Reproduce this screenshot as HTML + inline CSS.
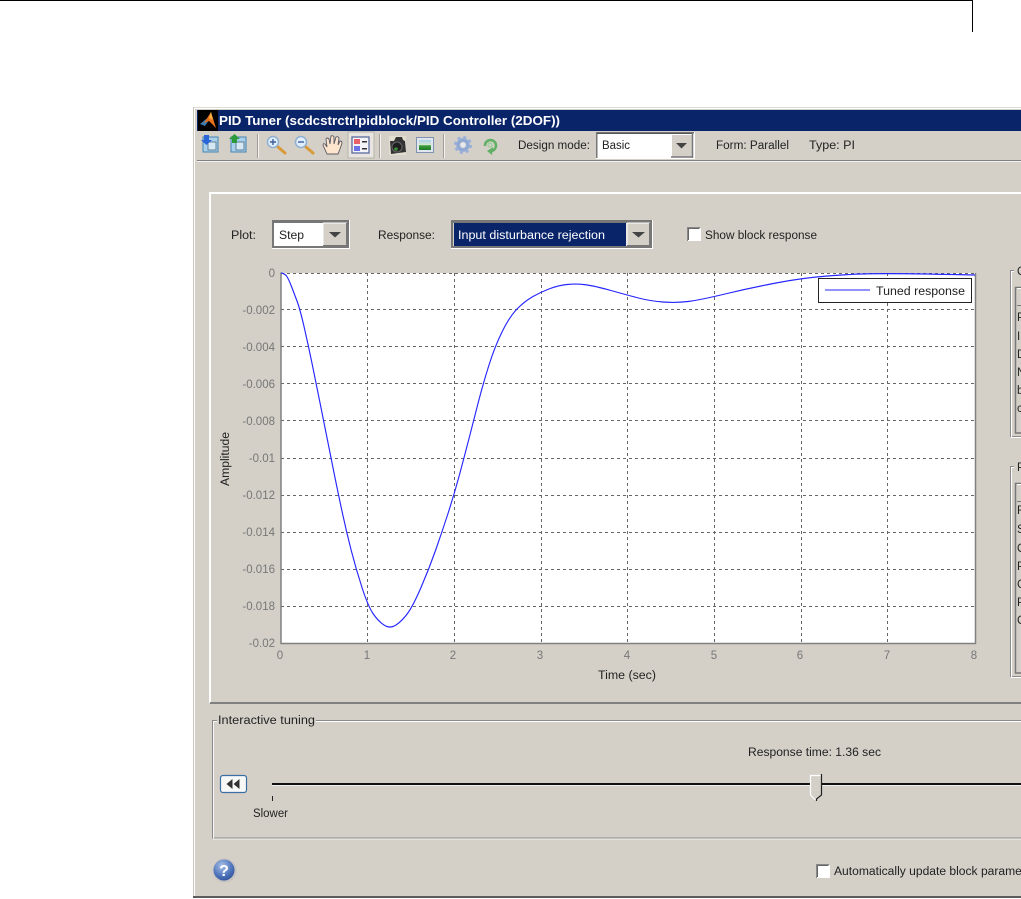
<!DOCTYPE html>
<html>
<head>
<meta charset="utf-8">
<title>PID Tuner</title>
<style>
html,body{margin:0;padding:0;background:#fff;width:1021px;height:899px;overflow:hidden}
svg{display:block;position:absolute;left:0;top:0;filter:blur(.35px)}
text{font-family:"Liberation Sans",sans-serif;font-size:11.5px;fill:#222}
.t{fill:#777;font-size:11.5px}
</style>
</head>
<body>
<svg width="1021" height="899" viewBox="0 0 1021 899" xmlns="http://www.w3.org/2000/svg">
<defs>
<radialGradient id="help" cx=".4" cy=".3" r=".8"><stop offset="0" stop-color="#a9c0e8"/><stop offset=".6" stop-color="#4f74bb"/><stop offset="1" stop-color="#2c4b93"/></radialGradient>
<linearGradient id="sky" x1="0" y1="0" x2="0" y2="1"><stop offset="0" stop-color="#a8d0e8"/><stop offset=".5" stop-color="#d8e8d0"/><stop offset=".55" stop-color="#3aa03a"/><stop offset="1" stop-color="#1f7a2a"/></linearGradient>
</defs>

<!-- page rule -->
<rect x="0" y="0" width="973" height="1" fill="#000"/>
<rect x="972" y="0" width="1" height="32" fill="#000"/>

<!-- window -->
<rect x="193" y="107" width="828" height="791" fill="#d4d0c8"/>
<rect x="193" y="107" width="828" height="1" fill="#dedbd4"/>
<rect x="194" y="108" width="827" height="1" fill="#fff"/>
<rect x="193" y="107" width="1" height="791" fill="#c8c5bd"/>
<rect x="194" y="108" width="1" height="789" fill="#fff"/>
<rect x="193" y="896" width="828" height="2" fill="#5c5c5c"/>

<!-- title bar -->
<rect x="197" y="110" width="824" height="21" fill="#0a246a"/>
<rect x="198" y="110" width="20" height="21" fill="#000"/>
<path d="M200 124 L206 119 L209 120 L205 126Z" fill="#3c7ab0"/>
<path d="M204 123 L211 112 L216 128 L213 125 L209 121Z" fill="#e8701a"/>
<path d="M209 118 L211 112 L213 120Z" fill="#f5b040"/>
<text x="219" y="125" style="fill:#fff;font-size:12.5px;font-weight:bold" textLength="341" lengthAdjust="spacingAndGlyphs">PID Tuner (scdcstrctrlpidblock/PID Controller (2DOF))</text>

<!-- toolbar -->
<rect x="197" y="160" width="824" height="1" fill="#808080"/>
<rect x="197" y="161" width="824" height="1" fill="#f4f3f0"/>
<rect x="257" y="134" width="1" height="24" fill="#a09d96"/><rect x="258" y="134" width="1" height="24" fill="#f4f3f0"/>
<rect x="379" y="134" width="1" height="24" fill="#a09d96"/><rect x="380" y="134" width="1" height="24" fill="#f4f3f0"/>
<rect x="443" y="134" width="1" height="24" fill="#a09d96"/><rect x="444" y="134" width="1" height="24" fill="#f4f3f0"/>
<!-- selected toggle -->
<rect x="348" y="132" width="26" height="26" fill="#e8e5e0" stroke="#b5b2aa"/>

<!-- import icons -->
<g>
<rect x="203" y="137" width="15" height="15" fill="#a9d0ea" stroke="#4682b0"/>
<rect x="208" y="142" width="8" height="8" fill="#d5e8f4" stroke="#5a7f98"/>
<path d="M204 135h5v5h3l-5.500 5-5.500-5h3z" fill="#2a66d8"/>
<rect x="231" y="137" width="15" height="15" fill="#a9d0ea" stroke="#4682b0"/>
<rect x="236" y="142" width="8" height="8" fill="#d5e8f4" stroke="#5a7f98"/>
<path d="M232 143h5v-4h3l-5.500-5-5.500 5h3z" fill="#2d9a3a"/>
</g>
<!-- zoom icons -->
<g>
<line x1="278" y1="147" x2="285" y2="153" stroke="#d89a3a" stroke-width="3" stroke-linecap="round"/>
<circle cx="273" cy="142" r="5.500" fill="#dfeefa" stroke="#8fb0d0" stroke-width="1.500"/>
<path d="M270 142h6M273 139v6" stroke="#3b5f9a" stroke-width="1.400"/>
<line x1="306" y1="147" x2="313" y2="153" stroke="#d89a3a" stroke-width="3" stroke-linecap="round"/>
<circle cx="301" cy="142" r="5.500" fill="#dfeefa" stroke="#8fb0d0" stroke-width="1.500"/>
<path d="M298 142h6" stroke="#3b5f9a" stroke-width="1.400"/>
</g>
<!-- hand -->
<path d="M327 154 L323 145 Q323 143 325 144 L327 147 L326 139 Q327 137 329 139 L330 144 L331 136 Q333 135 334 137 L334 144 L336 137 Q338 136 339 138 L338 145 L340 141 Q342 141 342 143 L340 149 L338 154Z" fill="#fde4cc" stroke="#5a5a65" stroke-width=".9"/>
<!-- legend icon -->
<rect x="352" y="137" width="17" height="16" fill="#f4f4f8" stroke="#5a6aa0" stroke-width="1.300"/>
<rect x="354" y="139" width="6" height="5" fill="#e8606a"/>
<rect x="354" y="146" width="6" height="5" fill="#6a72e8"/>
<rect x="362" y="141" width="5" height="1.500" fill="#333"/>
<rect x="362" y="148" width="5" height="1.500" fill="#333"/>
<!-- camera -->
<rect x="389" y="136" width="17" height="19" fill="#e3dfd0"/>
<path d="M390 141 L394 141 L396 137 L402 137 L403 140 L405 141 L406 152 L391 154Z" fill="#333"/>
<circle cx="397" cy="147" r="5" fill="#1e1e1e" stroke="#666"/>
<circle cx="396" cy="149" r="1.800" fill="#3a8a3a"/>
<!-- image icon -->
<rect x="416.500" y="137.500" width="17" height="15" fill="#dfe6ee" stroke="#7f93b0"/>
<rect x="419" y="140" width="12" height="10" fill="url(#sky)"/>
<!-- gear -->
<g>
<circle cx="463" cy="145" r="5" fill="none" stroke="#8fa8d4" stroke-width="3.500"/>
<circle cx="463" cy="145" r="7.500" fill="none" stroke="#9ab0da" stroke-width="3" stroke-dasharray="3 2.900"/>
<circle cx="463" cy="145" r="2.500" fill="#e4e9f2"/>
</g>
<!-- refresh -->
<path d="M485 146 A5.500 5.500 0 1 1 491 151" fill="none" stroke="#62b066" stroke-width="2.600"/>
<path d="M493 147 L487 151 L492 155Z" fill="#62b066"/>
<circle cx="490" cy="145" r="2" fill="none" stroke="#8ccf90" stroke-width="1"/>

<text x="518" y="149" textLength="72" lengthAdjust="spacingAndGlyphs">Design mode:</text>
<!-- Basic combo -->
<rect x="596" y="132" width="99" height="27" fill="#fff"/>
<rect x="596" y="132" width="98" height="1.500" fill="#777"/><rect x="596" y="132" width="1.500" height="26" fill="#777"/>
<rect x="597" y="133" width="96" height="1" fill="#555"/>
<rect x="598" y="134" width="95" height="24" fill="#fff"/>
<rect x="671" y="134" width="22" height="23" fill="#d4d0c8"/>
<rect x="671" y="134" width="22" height="1" fill="#fff"/><rect x="671" y="134" width="1" height="23" fill="#fff"/>
<path d="M692.500 133v25M671 157h22" stroke="#777" stroke-width="1.500"/>
<path d="M676 143h11l-5.500 5.500z" fill="#444"/>
<text x="602" y="149" textLength="28" lengthAdjust="spacingAndGlyphs">Basic</text>
<text x="716" y="149" textLength="73" lengthAdjust="spacingAndGlyphs">Form: Parallel</text>
<text x="809" y="149" textLength="46" lengthAdjust="spacingAndGlyphs">Type: PI</text>

<!-- plot panel -->
<rect x="209" y="192" width="812" height="2" fill="#fff"/>
<rect x="209" y="192" width="2" height="511" fill="#fff"/>
<rect x="210" y="702" width="811" height="2" fill="#808080"/>

<!-- Plot combo -->
<text x="231" y="239" textLength="25" lengthAdjust="spacingAndGlyphs">Plot:</text>
<rect x="272" y="220" width="78" height="29" fill="#fff"/>
<rect x="272" y="220" width="77" height="28" fill="#777"/>
<rect x="274" y="223" width="73" height="23" fill="#fff"/>
<rect x="323" y="223" width="24" height="23" fill="#d4d0c8"/>
<path d="M323 223h24M323 223v23" stroke="#fff"/>
<path d="M346.500 223v23M323 245.500h24" stroke="#777"/>
<path d="M329 232h12l-6 5.500z" fill="#444"/>
<text x="279" y="239" textLength="25" lengthAdjust="spacingAndGlyphs">Step</text>

<!-- Response combo -->
<text x="378" y="239" textLength="57" lengthAdjust="spacingAndGlyphs">Response:</text>
<rect x="451" y="220" width="202" height="29" fill="#fff"/>
<rect x="451" y="220" width="201" height="28" fill="#777"/>
<rect x="453" y="223" width="197" height="23" fill="#d4d0c8"/>
<rect x="454" y="223" width="172" height="23" fill="#0a246a"/>
<path d="M627 223h23M627 223v23" stroke="#fff"/>
<path d="M649.500 223v23M627 245.500h23" stroke="#777"/>
<path d="M632 232h13l-6.500 5.500z" fill="#444"/>
<text x="458" y="239" style="fill:#fff" textLength="147" lengthAdjust="spacingAndGlyphs">Input disturbance rejection</text>

<!-- Show block response -->
<rect x="687" y="227" width="14" height="14" fill="#fff"/>
<path d="M687.500 241v-13.500h13" fill="none" stroke="#888"/>
<path d="M688.500 240v-11.500h11" fill="none" stroke="#666"/>
<text x="705" y="239" textLength="112" lengthAdjust="spacingAndGlyphs">Show block response</text>

<!-- plot area -->
<rect x="281" y="273" width="694" height="370" fill="#fff"/>
<g stroke="#666" stroke-width="1" stroke-dasharray="3 3" fill="none">
<path d="M281 273.500H975M281 309.500H975M281 346.500H975M281 383.500H975M281 420.500H975M281 458.500H975M281 495.500H975M281 532.500H975M281 569.500H975M281 606.500H975"/>
<path d="M367.500 273V643M454.500 273V643M541.500 273V643M627.500 273V643M714.500 273V643M801.500 273V643M887.500 273V643"/>
</g>
<path d="M281 272.500V643.500H975.500V273" fill="none" stroke="#808080" stroke-width="1.500"/>
<path fill="none" stroke="#2626ff" stroke-width="1.150" stroke-linejoin="round" d="M281,273 Q285,273.500 287,276.750 Q289,280 291.500,286.500 Q294,293 297,301 Q300,309 304.250,327.500 Q308.500,346 312.250,364.500 Q316,383 319.750,401.500 Q323.500,420 327.250,439 Q331,458 334.750,476.500 Q338.500,495 342.500,513.500 Q346.500,532 351.250,550.500 Q356,569 362,587.500 Q368,606 373,613.500 Q378,621 384,625 Q390,629 396,625 Q402,621 407.500,613.500 Q413,606 421,587.500 Q429,569 435.500,550.500 Q442,532 448,513.500 Q454,495 459,476.500 Q464,458 468.750,439.500 Q473.500,421 478.250,402.500 Q483,384 489,365 Q495,346 502.500,331 Q510,316 517.500,308.500 Q525,301 533,296.500 Q541,292 549.500,288.750 Q558,285.500 567,284.500 Q576,283.500 585.500,284.750 Q595,286 611,290.500 Q627,295 638.500,298 Q650,301 663,302 Q676,303 688,301.500 Q700,300 725,294 Q750,288 776,283 Q802,278 827.500,276 Q853,274 870,273.750 Q887,273.500 908.500,273.750 Q930,274 975,275"/>

<!-- legend -->
<rect x="818.500" y="278.500" width="153" height="24" fill="#fff" stroke="#222"/>
<line x1="825" y1="290" x2="870" y2="290" stroke="#2626ff" stroke-width="1.100"/>
<text x="876" y="295" textLength="89" lengthAdjust="spacingAndGlyphs">Tuned response</text>

<!-- y ticks -->
<g text-anchor="end">
<text class="t" x="275" y="277">0</text>
<text class="t" x="275" y="314">-0.002</text>
<text class="t" x="275" y="351">-0.004</text>
<text class="t" x="275" y="388">-0.006</text>
<text class="t" x="275" y="425">-0.008</text>
<text class="t" x="275" y="462">-0.01</text>
<text class="t" x="275" y="499">-0.012</text>
<text class="t" x="275" y="536">-0.014</text>
<text class="t" x="275" y="573">-0.016</text>
<text class="t" x="275" y="610">-0.018</text>
<text class="t" x="275" y="647">-0.02</text>
</g>
<!-- x ticks -->
<g text-anchor="middle">
<text class="t" x="280" y="659">0</text>
<text class="t" x="367" y="659">1</text>
<text class="t" x="453" y="659">2</text>
<text class="t" x="540" y="659">3</text>
<text class="t" x="627" y="659">4</text>
<text class="t" x="714" y="659">5</text>
<text class="t" x="800" y="659">6</text>
<text class="t" x="887" y="659">7</text>
<text class="t" x="974" y="659">8</text>
</g>
<text x="598" y="679" textLength="58" lengthAdjust="spacingAndGlyphs">Time (sec)</text>
<text transform="translate(229 486) rotate(-90)" x="0" y="0" textLength="54" lengthAdjust="spacingAndGlyphs">Amplitude</text>

<!-- right groups -->
<g fill="none">
<path d="M1021 270.500H1010.500V436.500H1021" stroke="#8a8a8a"/>
<path d="M1021 271.500H1011.500V437.500H1021" stroke="#fff"/>
<path d="M1021 287.500H1015.500V433H1021" stroke="#777" stroke-width="1.500"/>
<path d="M1021 466.500H1010.500V676.500H1021" stroke="#8a8a8a"/>
<path d="M1021 467.500H1011.500V677.500H1021" stroke="#fff"/>
<path d="M1021 483.500H1015.500V673H1021" stroke="#777" stroke-width="1.500"/>
<path d="M1017 305.500H1021M1017 501.500H1021" stroke="#777"/>
<path d="M1017 288.500H1021M1017 484.500H1021" stroke="#fff"/>
</g>
<rect x="1014" y="264" width="7" height="12" fill="#d4d0c8"/>
<rect x="1014" y="460" width="7" height="12" fill="#d4d0c8"/>
<text x="1017" y="275">Controller parameters</text>
<text x="1017" y="471">Performance and robustness</text>
<g>
<text x="1017" y="321">P</text>
<text x="1017" y="340">I</text>
<text x="1017" y="358">D</text>
<text x="1017" y="376">N</text>
<text x="1017" y="394">b</text>
<text x="1017" y="412">c</text>
<text x="1017" y="514">Rise time</text>
<text x="1017" y="533">Settling time</text>
<text x="1017" y="552">Overshoot</text>
<text x="1017" y="570">Peak</text>
<text x="1017" y="588">Gain margin</text>
<text x="1017" y="606">Phase margin</text>
<text x="1017" y="624">Closed-loop stability</text>
</g>

<!-- interactive tuning -->
<path d="M217 720.500H212.500V838H1021" fill="none" stroke="#8a8a8a"/>
<path d="M316 720.500H1021" stroke="#8a8a8a" fill="none"/>
<path d="M217 721.500H213.500V839H1021" fill="none" stroke="#fff" opacity=".8"/>
<path d="M316 721.500H1021" stroke="#fff" fill="none"/>
<text x="218" y="724" textLength="97" lengthAdjust="spacingAndGlyphs">Interactive tuning</text>

<text x="748" y="756" textLength="133" lengthAdjust="spacingAndGlyphs">Response time: 1.36 sec</text>

<!-- button -->
<rect x="220.500" y="775.500" width="26" height="17" rx="2.500" fill="#f8f8f6" stroke="#3a6ea5" stroke-width="1.200"/>
<path d="M232.500 779v10l-6-5zM239.500 779v10l-6-5z" fill="#333"/>

<!-- slider -->
<rect x="272" y="783" width="749" height="2" fill="#111"/>
<rect x="272" y="785" width="749" height="1" fill="#f0efec"/>
<rect x="272" y="796" width="1" height="5" fill="#222"/>
<path d="M810.500 775.500H821.500V795L816 800.500L810.500 795Z" fill="#d4d0c8"/>
<path d="M810.500 795V775.500H820.500" fill="none" stroke="#fff" stroke-width="1.200"/>
<path d="M810.500 795L815.500 800" fill="none" stroke="#fff" stroke-width="1.200"/>
<path d="M821.500 774V795L816.500 799V801" fill="none" stroke="#222" stroke-width="1.200"/>
<text x="253" y="817" textLength="35" lengthAdjust="spacingAndGlyphs">Slower</text>

<!-- help -->
<circle cx="224.500" cy="870.500" r="12" fill="#c4c3c2"/>
<circle cx="224" cy="870" r="10.500" fill="url(#help)"/>
<text x="224" y="876" text-anchor="middle" style="fill:#fff;font-size:16px;font-weight:bold">?</text>

<!-- auto update -->
<rect x="816" y="864" width="14" height="14" fill="#fff"/>
<path d="M816.500 878v-13.500h13" fill="none" stroke="#888"/>
<path d="M817.500 877v-11.500h11" fill="none" stroke="#666"/>
<text x="834" y="875" textLength="208" lengthAdjust="spacingAndGlyphs">Automatically update block parameters</text>
</svg>
</body>
</html>
